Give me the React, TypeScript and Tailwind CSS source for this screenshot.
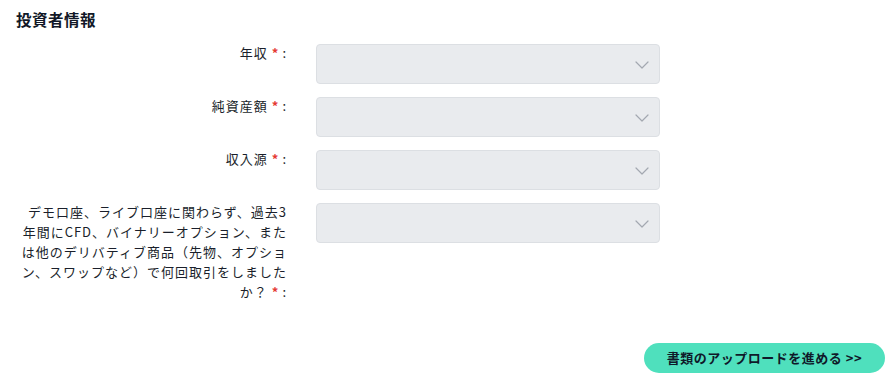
import React from "react";

const font = { fontFamily: '"Noto Sans CJK JP", "Noto Sans", sans-serif' };

function Chevron() {
  return (
    <svg width="14" height="8" viewBox="0 0 14 8" fill="none" className="absolute right-[10px] top-[16px]">
      <path d="M1 1l6 6 6-6" stroke="#a3a8b0" strokeWidth="1.2" strokeLinecap="round" strokeLinejoin="round" />
    </svg>
  );
}

function Row({ label }: { label: string }) {
  return (
    <div className="flex items-start">
      <div className="w-[271px] text-right text-[13px] leading-[20px] tracking-[1px] text-[#1a1f2b] -mt-[1px]">
        {label}
        <span className="ml-[4px] text-[#e53935] text-[13px] font-bold">*</span>
        <span className="ml-[3px]">:</span>
      </div>
      <div className="ml-[29px] relative w-[344px] h-[40px] rounded-[4px] bg-[#e9ebee] border border-[#dcdfe3]">
        <Chevron />
      </div>
    </div>
  );
}

export default function App() {
  return (
    <div className="w-[892px] h-[390px] bg-white relative" style={font}>
      <div className="pl-[16px] pt-[7px]">
        <h2 className="text-[15.5px] font-bold text-[#111827] leading-[24px] tracking-[0.5px]">投資者情報</h2>
        <div className="mt-[13px] flex flex-col gap-[13px]">
          <Row label="年収" />
          <Row label="純資産額" />
          <Row label="収入源" />
          <Row label="デモ口座、ライブ口座に関わらず、過去3年間にCFD、バイナリーオプション、または他のデリバティブ商品（先物、オプション、スワップなど）で何回取引をしましたか？" />
        </div>
      </div>
      <div className="flex justify-end pr-[7px] mt-[41px]">
        <button className="h-[30px] w-[241px] rounded-full bg-[#4fe0bd] text-[13px] font-bold text-[#0f1a2a] tracking-[0.5px]">
          書類のアップロードを進める &gt;&gt;
        </button>
      </div>
    </div>
  );
}
